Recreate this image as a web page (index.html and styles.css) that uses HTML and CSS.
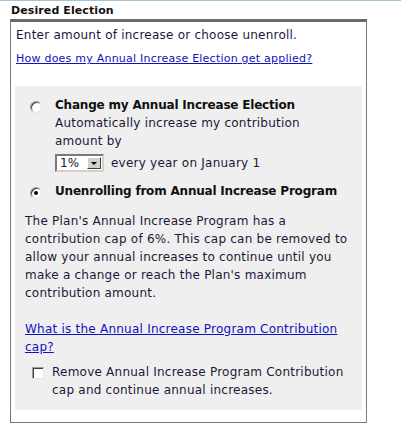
FILE: index.html
```html
<!DOCTYPE html>
<html lang="en">
<head>
    <meta charset="UTF-8">
    <title>Desired Election</title>
    <link rel="stylesheet" href="styles.css">
</head>
<body>
    <div class="topline"></div>
    <h2 class="section-title">Desired Election</h2>

    <div class="election-box">
        <p class="intro">Enter amount of increase or choose unenroll.</p>
        <a class="help-link" href="#">How does my Annual Increase Election get applied?</a>

        <div class="panel">
            <div class="option">
                <span class="radio"></span>
                <div class="option-body">
                    <div class="option-title">Change my Annual Increase Election</div>
                    <div>Automatically increase my contribution amount by</div>
                    <div class="select-row">
                        <div class="select">
                            <span class="select-value">1%</span>
                            <span class="select-btn"><span class="arrow"></span></span>
                        </div>
                        <span>every year on January 1</span>
                    </div>
                </div>
            </div>

            <div class="option option-second">
                <span class="radio checked"></span>
                <div class="option-body">
                    <div class="option-title">Unenrolling from Annual Increase Program</div>
                </div>
            </div>

            <p class="cap-text">The Plan's Annual Increase Program has a contribution cap of 6%. This cap can be removed to allow your annual increases to continue until you make a change or reach the Plan's maximum contribution amount.</p>

            <a class="cap-link" href="#">What is the Annual Increase Program Contribution cap?</a>

            <div class="check-row">
                <span class="checkbox"></span>
                <span class="check-text">Remove Annual Increase Program Contribution cap and continue annual increases.</span>
            </div>
        </div>
    </div>
</body>
</html>
```

FILE: styles.css
```css
body {
    margin: 0;
    font-family: "DejaVu Sans", Verdana, sans-serif;
    font-size: 12px;
    letter-spacing: 0.23px;
    color: #1c1838;
    background-color: #fff;
}
.topline {
    height: 1px;
    background-color: #a3c2d4;
}
.section-title {
    margin: 3px 0 1px 11px;
    font-size: 11px;
    line-height: 14px;
    font-weight: bold;
    letter-spacing: 0.1px;
    color: #111;
}
.election-box {
    margin-left: 10px;
    width: 355px;
    border: 1px solid #7a7a7a;
    border-top: 3px solid #6a6a6a;
    padding: 4px 0 12px 0;
}
.intro {
    margin: 0 0 7px 5px;
    line-height: 18px;
}
.help-link {
    display: block;
    margin-left: 5px;
    font-size: 11px;
    line-height: 16px;
    color: #1010c0;
}
.panel {
    margin: 19px 4px 0 4px;
    padding: 10px 8px 11px 10px;
    background-color: #efefef;
    line-height: 18px;
}
.option {
    display: flex;
    align-items: flex-start;
    margin-left: 5px;
    padding-right: 10px;
}
.option-second {
    margin-top: 10px;
}
.radio {
    flex: none;
    width: 10px;
    height: 10px;
    margin: 5px 13px 0 0;
    border-radius: 50%;
    border: 1px solid #9a9a9a;
    border-right-color: #e4e4e4;
    border-bottom-color: #e4e4e4;
    background-color: #fff;
    box-shadow: inset 1px 1px 0 #404040;
    position: relative;
}
.radio.checked::after {
    content: "";
    position: absolute;
    left: 3px;
    top: 3px;
    width: 4px;
    height: 4px;
    border-radius: 50%;
    background-color: #000;
}
.option-title {
    font-weight: bold;
    letter-spacing: -0.2px;
    color: #111;
}
.select-row {
    display: flex;
    align-items: center;
    gap: 7px;
    margin-top: 4px;
}
.select {
    display: flex;
    width: 45px;
    height: 14px;
    border: 2px solid #7a7a7a;
    border-right-color: #d4d0c8;
    border-bottom-color: #d4d0c8;
    background-color: #fff;
    line-height: 14px;
}
.select-value {
    flex: 1;
    padding-left: 3px;
}
.select-btn {
    width: 14px;
    height: 12px;
    margin: 1px;
    background-color: #d4d0c8;
    border: 1px solid #fff;
    border-right-color: #404040;
    border-bottom-color: #404040;
    box-sizing: border-box;
    display: flex;
    align-items: center;
    justify-content: center;
}
.arrow {
    width: 0;
    height: 0;
    border-left: 3px solid transparent;
    border-right: 3px solid transparent;
    border-top: 3px solid #000;
}
.cap-text {
    margin: 12px 0 18px 0;
}
.cap-link {
    display: block;
    color: #1010c0;
    padding-right: 10px;
}
.check-row {
    display: flex;
    align-items: flex-start;
    margin: 7px 0 0 7px;
}
.checkbox {
    flex: none;
    width: 10px;
    height: 10px;
    margin: 4px 8px 0 0;
    border: 1px solid #9a9a9a;
    border-right-color: #e4e4e4;
    border-bottom-color: #e4e4e4;
    background-color: #fff;
    box-shadow: inset 1px 1px 0 #404040;
}
```
